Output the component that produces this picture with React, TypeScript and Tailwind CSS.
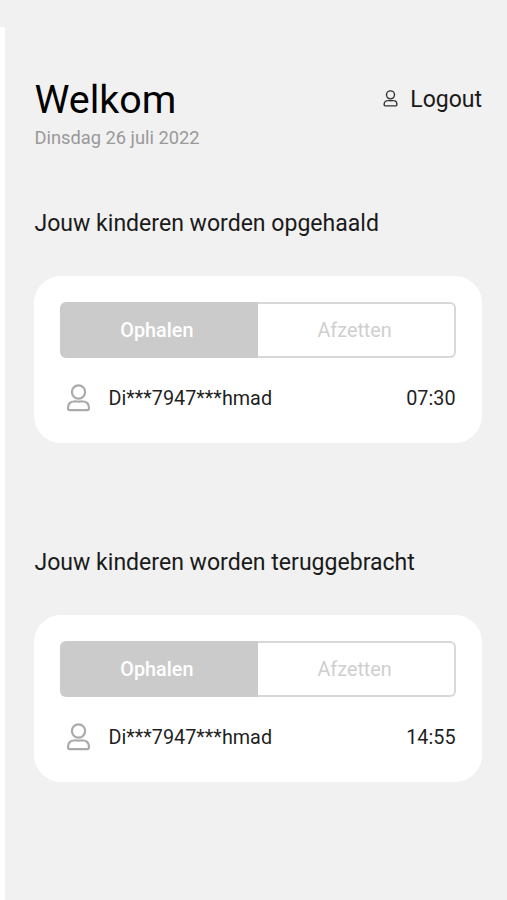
type Ride = {
  title: string
  child: string
  time: string
}

const RIDES: Ride[] = [
  { title: 'Jouw kinderen worden opgehaald', child: 'Di***7947***hmad', time: '07:30' },
  { title: 'Jouw kinderen worden teruggebracht', child: 'Di***7947***hmad', time: '14:55' },
]

function PersonIcon({ className, strokeWidth }: { className: string; strokeWidth: number }) {
  return (
    <svg viewBox="0 0 24 28" fill="none" stroke="currentColor" strokeWidth={strokeWidth} className={className}>
      <circle cx="12" cy="8" r="6.6" />
      <path d="M7.2 17.5c1.8-.2 2.9.1 4.8.1s3-.3 4.8-.1a5.6 5.6 0 0 1 5.6 5.6v1.6a1.4 1.4 0 0 1-1.4 1.4H3a1.4 1.4 0 0 1-1.4-1.4v-1.6a5.6 5.6 0 0 1 5.6-5.6z" />
    </svg>
  )
}

function RideSection({ ride }: { ride: Ride }) {
  return (
    <section className="h-[339px]">
      <h2 className="pt-px text-[23.05px] leading-[30px] whitespace-nowrap text-[#1a1a1a]">{ride.title}</h2>
      <div className="mt-[37px] -ml-[0.5px] h-[167px] rounded-[27px] bg-white px-[26px] pt-[26px]">
        <div className="flex h-[55.5px] text-[19.8px]">
          <button className="flex-1 rounded-l-[6px] bg-[#cbcbcb] pt-[3px] pr-[4px] font-medium text-white">
            Ophalen
          </button>
          <button className="flex-1 rounded-r-[6px] border-2 border-l-0 border-[#d8d8d8] pt-[3px] pr-[2px] text-[#cfcfcf]">
            Afzetten
          </button>
        </div>
        <div className="mt-[26px] flex h-[30px] items-center text-[19.8px] text-[#1f1f1f]">
          <PersonIcon className="mb-[2px] ml-[6px] h-[28px] w-[25px] text-[#aaa]" strokeWidth={2.2} />
          <span className="ml-[17.5px]">{ride.child}</span>
          <span className="ml-auto">{ride.time}</span>
        </div>
      </div>
    </section>
  )
}

export default function App() {
  return (
    <div className="h-[900px] w-[507px] overflow-hidden bg-[#f1f1f1] pt-[27px] font-['Roboto',sans-serif]">
      <div className="h-full border-l-[5px] border-white pt-[49px] pr-[25.5px] pl-[29.5px]">
        <header className="flex h-[132px] items-start justify-between">
          <div>
            <h1 className="pt-px text-[39.4px] leading-[46px] text-black">Welkom</h1>
            <p className="mt-[2px] text-[18.3px] leading-[25px] text-[#999]">Dinsdag 26 juli 2022</p>
          </div>
          <button className="mt-[8px] -mr-[0.5px] flex items-center text-[23px] leading-[31px] text-[#1a1a1a]">
            <PersonIcon className="mr-[12px] mb-[3px] h-[17px] w-[15px] text-[#333]" strokeWidth={2.3} />
            Logout
          </button>
        </header>
        {RIDES.map((ride) => (
          <RideSection key={ride.title} ride={ride} />
        ))}
      </div>
    </div>
  )
}
